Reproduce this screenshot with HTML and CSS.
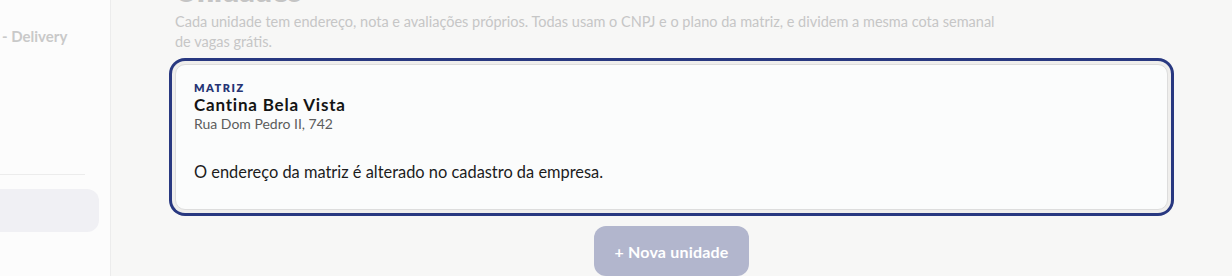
FILE: index.html
```html
<!DOCTYPE html>
<html lang="pt-BR">
<head>
  <meta charset="UTF-8" />
  <meta name="viewport" content="width=device-width, initial-scale=1.0"/>
  <title>Unidades</title>
  <link rel="stylesheet" href="styles.css">
</head>
<body>

  <aside class="sidebar">
    <div class="brand">- Delivery</div>
    <div class="divider"></div>
    <div class="nav-item"></div>
  </aside>

  <main class="main">
    <h1 class="title">Unidades</h1>
    <p class="desc">Cada unidade tem endereço, nota e avaliações próprios. Todas usam o CNPJ e o plano da matriz, e dividem a mesma cota semanal de vagas grátis.</p>

    <div class="unit-card">
      <div class="unit-tag">MATRIZ</div>
      <div class="unit-name">Cantina Bela Vista</div>
      <div class="unit-address">Rua Dom Pedro II, 742</div>
      <p class="unit-note">O endereço da matriz é alterado no cadastro da empresa.</p>
    </div>

    <div class="actions">
      <button class="add-btn">+ Nova unidade</button>
    </div>
  </main>

</body>
</html>
```

FILE: styles.css
```css
body {
  margin: 0;
  font-family: Lato, 'Noto Sans', sans-serif;
  background: #f7f7f6;
  color: #1c1c1c;
  display: flex;
  height: 276px;
  overflow: hidden;
}

.sidebar {
  width: 111px;
  flex-shrink: 0;
  background: #fcfcfc;
  border-right: 1px solid #ececec;
  padding-top: 27px;
  box-sizing: border-box;
}

.brand {
  font-size: 15px;
  font-weight: 700;
  color: #c9c9c9;
  padding-left: 2px;
  white-space: nowrap;
}

.divider {
  height: 1px;
  width: 85px;
  background: #ececec;
  margin-top: 129px;
}

.nav-item {
  width: 99px;
  height: 43px;
  margin-top: 14px;
  background: #f0f0f4;
  border-radius: 0 12px 12px 0;
}

.main {
  flex: 1;
  padding: 0 64px;
}

.title {
  margin: -28px 0 4px;
  font-size: 30px;
  line-height: 36px;
  font-weight: 800;
  color: #c4c4c4;
}

.desc {
  margin: 0;
  max-width: 830px;
  font-size: 14.5px;
  line-height: 20px;
  color: #c6c6c6;
}

.unit-card {
  margin-top: 12px;
  height: 146px;
  box-sizing: border-box;
  background: #fbfcfc;
  border: 1px solid #dddddd;
  border-radius: 10px;
  padding: 16px 18px;
  box-shadow: 0 0 0 3px #efeeec, 0 0 0 6px #283880;
}

.unit-tag {
  font-size: 11px;
  font-weight: 800;
  letter-spacing: 1.5px;
  color: #263474;
  line-height: 14px;
}

.unit-name {
  font-size: 17px;
  font-weight: 700;
  letter-spacing: 0.8px;
  line-height: 19px;
  color: #141414;
}

.unit-address {
  font-size: 14px;
  line-height: 20px;
  color: #5c5c5c;
}

.unit-note {
  margin: 28px 0 0;
  font-size: 16.4px;
  line-height: 20px;
  color: #1c1c1c;
}

.actions {
  display: flex;
  justify-content: center;
  margin-top: 16px;
}

.add-btn {
  font-family: inherit;
  font-size: 16px;
  font-weight: 700;
  letter-spacing: 0.2px;
  color: #ffffff;
  background: #b2b6cd;
  border: none;
  border-radius: 12px;
  width: 155px;
  height: 50px;
  cursor: pointer;
}
```
